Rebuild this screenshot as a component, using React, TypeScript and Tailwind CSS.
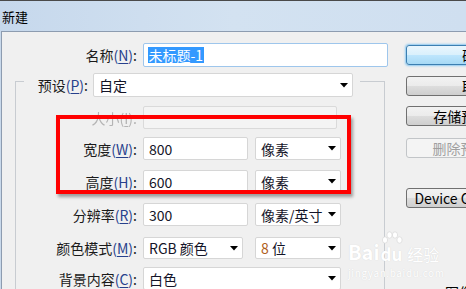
import React from 'react';

// 下拉箭头
const Arrow: React.FC<{ disabled?: boolean }> = ({ disabled }) => (
  <svg width="8" height="5" viewBox="0 0 8 5" className="ml-auto mr-[4px] shrink-0">
    <polygon points="0,0 8,0 4,4.5" fill={disabled ? '#c4c4c4' : '#000'} />
  </svg>
);

const Label: React.FC<{ text: string; k: string; w: string; disabled?: boolean }> = ({ text, k, w, disabled }) => (
  <div className={`${w} shrink-0 text-right whitespace-nowrap ${disabled ? 'text-[#b4b4b4] blur-[0.4px]' : 'text-[#1a1a1a]'}`}>
    {text}
    <span className={disabled ? '' : 'text-[#27408c]'}>
      (<span className="underline underline-offset-2">{k}</span>)
    </span>
    :
  </div>
);

const Field: React.FC<{ w: string; children?: React.ReactNode; arrow?: boolean; disabled?: boolean; h?: string }> = ({
  w,
  children,
  arrow,
  disabled,
  h = 'h-[23px]',
}) => (
  <div
    className={`${w} ${h} shrink-0 flex items-center pl-[5px] rounded-[2px] border ${
      disabled ? 'bg-[#f4f4f4] border-[#dadada]' : 'bg-white border-[#d6d6d6]'
    }`}
  >
    <span className="whitespace-nowrap text-[#141428]">{children}</span>
    {arrow && <Arrow disabled={disabled} />}
  </div>
);

const Button: React.FC<{ children: React.ReactNode; mt: string; kind?: 'default' | 'disabled' | 'normal' }> = ({
  children,
  mt,
  kind = 'normal',
}) => {
  const look =
    kind === 'default'
      ? 'border-[#3c7fb1] bg-[linear-gradient(#eaf6fd_0%,#d9f0fc_50%,#bee6fd_50%,#a7d9f5_100%)] shadow-[0_0_2px_1px_#8cc8f0] text-black'
      : kind === 'disabled'
      ? 'border-[#c2c5c8] bg-[#f4f4f4] text-[#a0a0a0]'
      : 'border-[#707070] bg-[linear-gradient(#f2f2f2_0%,#ebebeb_50%,#dddddd_50%,#cfcfcf_100%)] text-black';
  return (
    <div className={`${mt} w-[140px] h-[20px] shrink-0 rounded-[3px] border flex items-center justify-center whitespace-nowrap ${look}`}>
      {children}
    </div>
  );
};

// 百度经验水印（爪印）
const Paw: React.FC = () => (
  <svg width="22" height="20" viewBox="0 0 22 20" className="absolute -top-[14px] left-0">
    <g fill="#fff" stroke="#d2d2d2" strokeWidth="0.6">
      <ellipse cx="4" cy="9" rx="2.6" ry="3.2" />
      <ellipse cx="8.5" cy="4" rx="2.6" ry="3.2" />
      <ellipse cx="14" cy="4" rx="2.6" ry="3.2" />
      <ellipse cx="18.5" cy="9" rx="2.6" ry="3.2" />
    </g>
  </svg>
);

const App: React.FC = () => {
  return (
    <div className="relative w-[466px] h-[289px] overflow-hidden flex flex-col text-[14px] leading-none font-['Noto_Sans_CJK_SC',sans-serif]">
      {/* 标题栏 */}
      <div className="h-[31px] shrink-0 border-t border-[#4a4a4a] bg-linear-to-r from-[#c6d8ec] via-[#d3e2f1] to-[#cfdff0] flex items-center pl-[2px] text-[13px] text-black">
        新建
      </div>

      <div className="flex-1 flex bg-[#c9d9eb] pl-[1px] min-h-0">
        <div className="flex-1 flex border-l border-t border-[#8d9cb0] bg-[#f0f0f0]">
          {/* 左侧表单 */}
          <div className="w-[404px] shrink-0 flex flex-col">
            <div className="mt-[11px] flex items-center">
              <Label text="名称" k="N" w="w-[135px]" />
              <div className="ml-[6px] w-[245px] h-[24px] flex items-center pl-[4px] bg-white border border-[#9ec6ec] rounded-[2px]">
                <span className="bg-[#3399ff] text-white h-[16px] flex items-center px-[0.5px]">未标题-1</span>
              </div>
            </div>

            {/* 分组框 */}
            <div className="mt-[14px] ml-[13px] w-[370px] flex-1 border-l border-t border-r border-[#c8ccd1] flex flex-col">
              <div className="-mt-[9px] ml-[8px] w-[336px] h-[24px] bg-[#f0f0f0] flex items-center">
                <Label text="预设" k="P" w="w-[64px]" />
                <div className="ml-[5px]">
                  <Field w="w-[260px]" h="h-[24px]" arrow>
                    自定
                  </Field>
                </div>
              </div>

              <div className="mt-[9px] flex items-center">
                <Label text="大小" k="I" w="w-[121px]" disabled />
                <div className="ml-[6px]">
                  <Field w="w-[194px]" arrow disabled />
                </div>
              </div>

              <div className="mt-[8px] flex items-center">
                <Label text="宽度" k="W" w="w-[121px]" />
                <div className="ml-[6px] flex gap-[7px]">
                  <Field w="w-[105px]">800</Field>
                  <Field w="w-[86px]" arrow>
                    像素
                  </Field>
                </div>
              </div>

              <div className="mt-[10px] flex items-center">
                <Label text="高度" k="H" w="w-[121px]" />
                <div className="ml-[6px] flex gap-[7px]">
                  <Field w="w-[105px]">600</Field>
                  <Field w="w-[86px]" arrow>
                    像素
                  </Field>
                </div>
              </div>

              <div className="mt-[10px] flex items-center">
                <Label text="分辨率" k="R" w="w-[121px]" />
                <div className="ml-[6px] flex gap-[7px]">
                  <Field w="w-[105px]">300</Field>
                  <Field w="w-[86px]" arrow>
                    像素/英寸
                  </Field>
                </div>
              </div>

              <div className="mt-[11px] flex items-center">
                <Label text="颜色模式" k="M" w="w-[121px]" />
                <div className="ml-[6px] flex gap-[12px]">
                  <Field w="w-[100px]" h="h-[22px]" arrow>
                    RGB 颜色
                  </Field>
                  <Field w="w-[86px]" h="h-[22px]" arrow>
                    <span className="text-[#b0601a]">8</span> 位
                  </Field>
                </div>
              </div>

              <div className="mt-[8px] flex items-center">
                <Label text="背景内容" k="C" w="w-[121px]" />
                <div className="ml-[6px]">
                  <Field w="w-[198px]" arrow>
                    白色
                  </Field>
                </div>
              </div>
            </div>
          </div>

          {/* 右侧按钮 */}
          <div className="w-[140px] shrink-0 flex flex-col">
            <Button mt="mt-[13px]" kind="default">确定</Button>
            <Button mt="mt-[11px]">取消</Button>
            <Button mt="mt-[10px]">存储预设(S)...</Button>
            <Button mt="mt-[12px]" kind="disabled">删除预设(D)...</Button>
            <Button mt="mt-[30px]">Device Central(E)...</Button>
            <div className="mt-[77px] pl-[39px] whitespace-nowrap text-black">图像大小:</div>
          </div>
        </div>
      </div>

      {/* 红色标注框 */}
      <div className="absolute left-[56px] top-[115px] w-[295px] h-[79px] border-[4px] border-[#ff0000] shadow-[2px_3px_3px_rgba(0,0,0,0.35)] pointer-events-none" />

      {/* 水印 */}
      <div className="absolute left-[348px] top-[242px] flex flex-col items-start text-white pointer-events-none [text-shadow:0_0_1px_#d0d0d0]">
        <div className="flex items-end">
          <span className="text-[20px] font-bold leading-none">Bai</span>
          <span className="relative ml-[1px] text-[17px] font-bold leading-none">
            <Paw />
            du
          </span>
          <span className="ml-[5px] text-[16px] leading-none">经验</span>
        </div>
        <div className="mt-[6px] text-[10px] tracking-[0.6px] leading-none">jingyan.baidu.com</div>
      </div>
    </div>
  );
};

export default App;
